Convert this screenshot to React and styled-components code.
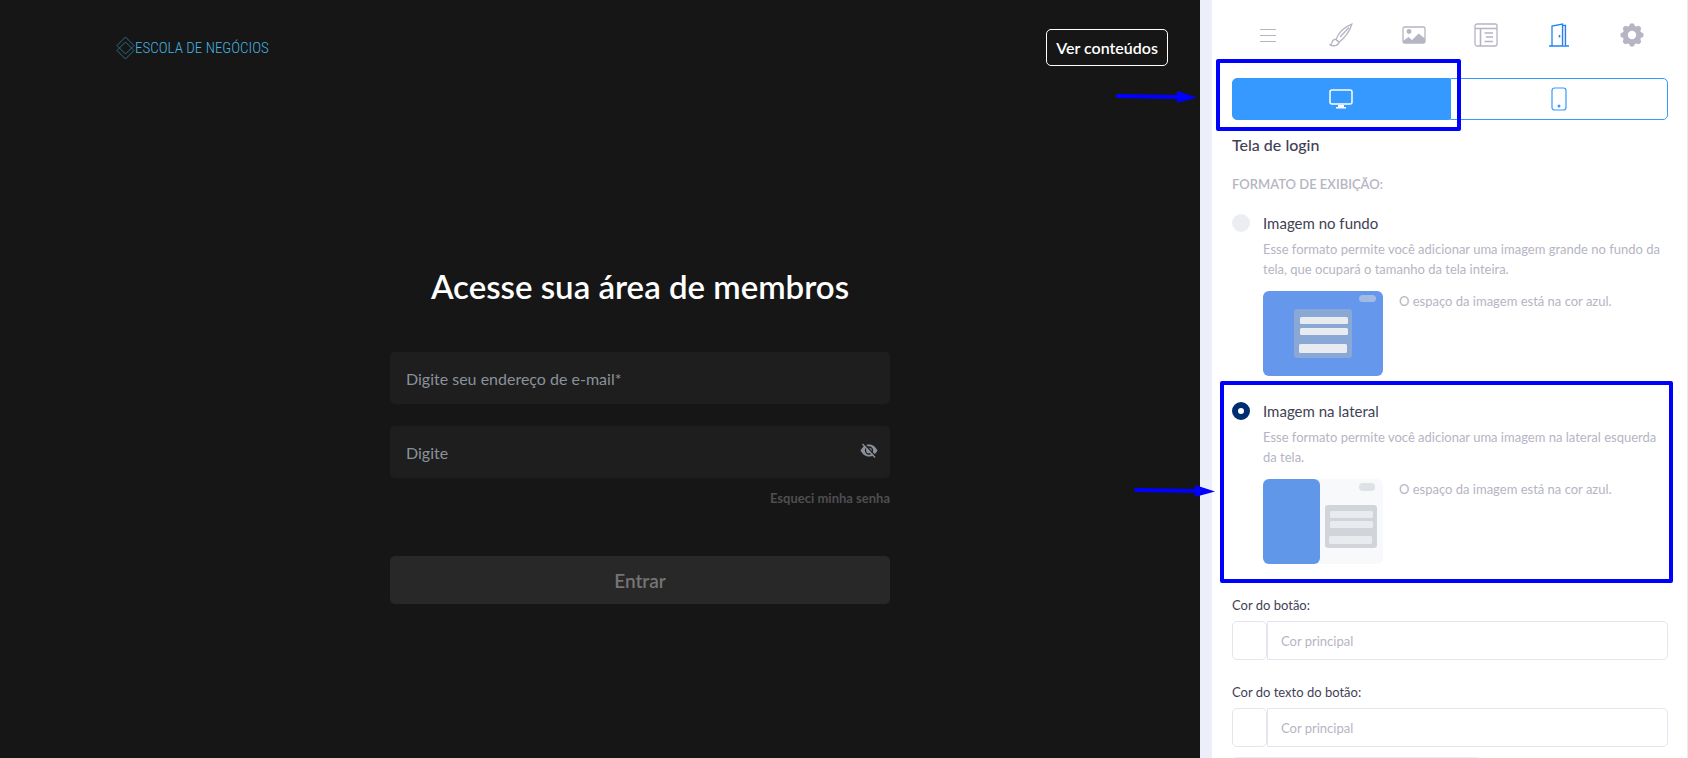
import React, { useState } from "react";
import styled, { createGlobalStyle } from "styled-components";

function App() {
    return (
        <>
            <GlobalStyle />
            <Page>
                <LoginPreview />
                <SettingsPanel />
            </Page>
        </>
    );
}

export default App;

function LoginPreview() {
    const [visible, setVisible] = useState(false);

    return (
        <Preview>
            <PreviewHeader>
                <Logo href="#">
                    <svg width="19" height="24" viewBox="0 0 19 24" fill="none" stroke="#2b6c80">
                        <path d="M9.500 1L18 9.500 9.500 18 1 9.500z" />
                        <path d="M9.500 6L18 14.500 9.500 23 1 14.500z" />
                    </svg>
                    <LogoText>ESCOLA DE NEGÓCIOS</LogoText>
                </Logo>
                <ContentsButton type="button">Ver conteúdos</ContentsButton>
            </PreviewHeader>
            <LoginForm onSubmit={(e) => e.preventDefault()}>
                <LoginTitle>Acesse sua área de membros</LoginTitle>
                <LoginInput
                    type="email"
                    aria-label="Digite seu endereço de e-mail"
                    placeholder="Digite seu endereço de e-mail*"
                />
                <PasswordBox>
                    <LoginInput
                        type={visible ? "text" : "password"}
                        aria-label="Senha"
                        placeholder="Digite"
                    />
                    <EyeButton
                        type="button"
                        aria-label="Mostrar senha"
                        onClick={() => setVisible(!visible)}
                    >
                        <EyeOffIcon />
                    </EyeButton>
                </PasswordBox>
                <ForgotLink href="#">Esqueci minha senha</ForgotLink>
                <SubmitButton type="submit">Entrar</SubmitButton>
            </LoginForm>
        </Preview>
    );
}

const MENU = [
    { name: "Menu", Icon: MenuIcon },
    { name: "Aparência", Icon: BrushIcon },
    { name: "Imagens", Icon: PictureIcon },
    { name: "Layout", Icon: LayoutIcon },
    { name: "Login", Icon: DoorIcon },
    { name: "Configurações", Icon: GearIcon },
];

const FORMATS = [
    {
        id: "fundo",
        title: "Imagem no fundo",
        text: "Esse formato permite você adicionar uma imagem grande no fundo da tela, que ocupará o tamanho da tela inteira.",
        Thumb: BackgroundThumb,
    },
    {
        id: "lateral",
        title: "Imagem na lateral",
        text: "Esse formato permite você adicionar uma imagem na lateral esquerda da tela.",
        Thumb: SideThumb,
    },
];

const COLORS = [
    { id: "cor-botao", label: "Cor do botão:" },
    { id: "cor-texto", label: "Cor do texto do botão:" },
];

function SettingsPanel() {
    const [tab, setTab] = useState("Login");
    const [device, setDevice] = useState("desktop");
    const [format, setFormat] = useState("lateral");

    return (
        <Panel>
            <MenuBar>
                {MENU.map(({ name, Icon }) => (
                    <MenuButton
                        key={name}
                        type="button"
                        aria-label={name}
                        $active={tab === name}
                        onClick={() => setTab(name)}
                    >
                        <Icon />
                    </MenuButton>
                ))}
            </MenuBar>

            <DeviceSwitch>
                <DeviceButton
                    type="button"
                    aria-label="Computador"
                    $active={device === "desktop"}
                    onClick={() => setDevice("desktop")}
                >
                    <DesktopIcon />
                </DeviceButton>
                <DeviceButton
                    type="button"
                    aria-label="Celular"
                    $active={device === "mobile"}
                    onClick={() => setDevice("mobile")}
                >
                    <PhoneIcon />
                </DeviceButton>
                <DeviceMark />
                <DeviceArrow />
            </DeviceSwitch>

            <PanelTitle>Tela de login</PanelTitle>
            <SectionTitle>FORMATO DE EXIBIÇÃO:</SectionTitle>

            {FORMATS.map(({ id, title, text, Thumb }) => (
                <Option key={id}>
                    <Radio
                        type="radio"
                        name="formato"
                        id={id}
                        checked={format === id}
                        onChange={() => setFormat(id)}
                    />
                    <OptionBody>
                        <OptionTitle htmlFor={id}>{title}</OptionTitle>
                        <OptionText>{text}</OptionText>
                        <Example>
                            <Thumb />
                            <OptionText>O espaço da imagem está na cor azul.</OptionText>
                        </Example>
                    </OptionBody>
                    {id === "lateral" && (
                        <>
                            <OptionMark />
                            <OptionArrow />
                        </>
                    )}
                </Option>
            ))}

            <Fields>
                {COLORS.map(({ id, label }) => (
                    <div key={id}>
                        <FieldLabel htmlFor={id}>{label}</FieldLabel>
                        <ColorRow>
                            <Swatch type="button" aria-label="Escolher cor" />
                            <ColorInput id={id} type="text" placeholder="Cor principal" />
                        </ColorRow>
                    </div>
                ))}
            </Fields>
            <NextField />
        </Panel>
    );
}

function Arrow({ className }) {
    return (
        <svg className={className} width="82" height="14" viewBox="0 0 82 14">
            <path d="M2 6L63 7" stroke="#00f" strokeWidth="4" strokeLinecap="round" />
            <path d="M61 1L81 7.500 61 13z" fill="#00f" />
        </svg>
    );
}

/* icons */

function EyeOffIcon() {
    return (
        <svg width="18" height="16" viewBox="0 0 18 16">
            <path
                d="M0.500 7.500C3 3 6 1.500 9 1.500s6 1.500 8.500 6C15 12 12 13.500 9 13.500S3 12 .5 7.500z"
                fill="#8a919b"
            />
            <circle cx="9" cy="7.500" r="3.500" fill="none" stroke="#1e1e1e" strokeWidth="1.300" />
            <path d="M3.500 0L16 13.500" stroke="#1e1e1e" strokeWidth="1.500" />
            <path d="M2.500 1L15 14.500" stroke="#8a919b" strokeWidth="1.300" />
        </svg>
    );
}

function MenuIcon() {
    return (
        <svg width="24" height="24" viewBox="0 0 24 24" fill="none" stroke="currentColor">
            <path d="M4 6.500h16M4 12.500h16M4 18.500h16" strokeWidth="1.200" />
        </svg>
    );
}

function BrushIcon() {
    return (
        <svg width="24" height="24" viewBox="0 0 24 24" fill="none" stroke="currentColor" strokeWidth="1.300">
            <path d="M7 16.500C9.500 10 15.500 4 22.800 1.200 20.500 8.500 16 14.500 10 19.200z" />
            <path d="M20 4.500L11 14" />
            <path d="M7 16.500c-2-.3-3.600.8-4 3-.2 1.400-.9 2-2 2.400 2.500 1.500 8.500 1.200 9-2.700z" />
        </svg>
    );
}

function PictureIcon() {
    return (
        <svg width="24" height="24" viewBox="0 0 24 24">
            <rect x="1" y="4" width="22" height="16" rx="1.500" fill="none" stroke="currentColor" strokeWidth="1.300" />
            <circle cx="7" cy="8.500" r="2.400" fill="currentColor" />
            <path d="M1 18l5.500-4 3.500 3 6.500-6.500 6.500 5V20H1z" fill="currentColor" />
        </svg>
    );
}

function LayoutIcon() {
    return (
        <svg width="24" height="24" viewBox="0 0 24 24" fill="none" stroke="currentColor" strokeWidth="1.300">
            <rect x="1" y="1" width="22" height="22" rx="2" />
            <path d="M1 5.500h22M6.500 5.500V23" strokeWidth="1.600" />
            <path d="M10.500 10h8.500M12 14h7M10.500 18.500h8.500" />
        </svg>
    );
}

function DoorIcon() {
    return (
        <svg width="24" height="24" viewBox="0 0 24 24" fill="none" stroke="currentColor" strokeWidth="1.300">
            <path d="M2 23h20M5 23V3L15.500 1v22M15.500 2.500h3V23" />
            <path d="M17 3v19.500" stroke="#d9c8e8" />
            <path d="M12.500 12v2.500" strokeWidth="1.600" />
        </svg>
    );
}

const TEETH = [0, 45, 90, 135, 180, 225, 270, 315];

function GearIcon() {
    return (
        <svg width="24" height="24" viewBox="-12 -12 24 24" fill="currentColor">
            <circle r="6.700" fill="none" stroke="currentColor" strokeWidth="5" />
            {TEETH.map((angle) => (
                <path
                    key={angle}
                    d="M-3.500 -8L-1.600 -11.500H1.600L3.500 -8z"
                    transform={`rotate(${angle})`}
                />
            ))}
        </svg>
    );
}

function DesktopIcon() {
    return (
        <svg width="24" height="24" viewBox="0 0 24 24" fill="none" stroke="currentColor">
            <rect x="1" y="3" width="22" height="14" rx="2" strokeWidth="1.500" />
            <path d="M9 18h6v2h2v1.500H7V20h2z" fill="currentColor" stroke="none" />
        </svg>
    );
}

function PhoneIcon() {
    return (
        <svg width="24" height="24" viewBox="0 0 24 24" fill="none" stroke="currentColor">
            <rect x="5" y="1" width="14" height="22" rx="2.500" strokeWidth="1.200" />
            <circle cx="12" cy="19" r="1.500" fill="currentColor" stroke="none" />
        </svg>
    );
}

function BackgroundThumb() {
    return (
        <ThumbSvg viewBox="0 0 120 85">
            <rect width="120" height="85" rx="6" fill="#6597ec" />
            <rect x="96" y="4" width="17" height="7" rx="3.500" fill="#a2bbe3" />
            <rect x="31" y="18" width="58" height="49" rx="3" fill="#8aa8d6" />
            <rect x="37" y="26" width="48" height="7" rx="1.500" fill="#e8ecf0" />
            <rect x="37" y="37" width="48" height="7" rx="1.500" fill="#e8ecf0" />
            <rect x="36" y="53" width="48" height="9" rx="1.500" fill="#e8ecf0" />
        </ThumbSvg>
    );
}

function SideThumb() {
    return (
        <ThumbSvg viewBox="0 0 120 85">
            <rect width="120" height="85" rx="6" fill="#f7f9fb" />
            <rect width="57" height="85" rx="6" fill="#6197e9" />
            <rect x="96" y="4" width="16" height="8" rx="4" fill="#dee2e7" />
            <rect x="62" y="26" width="52" height="43" rx="3" fill="#d1d5da" />
            <rect x="67" y="32" width="43" height="7" rx="1.500" fill="#e8ecef" />
            <rect x="67" y="42" width="43" height="7" rx="1.500" fill="#e8ecef" />
            <rect x="66" y="57" width="43" height="8" rx="1.500" fill="#e8ecef" />
        </ThumbSvg>
    );
}

// styled-components

const GlobalStyle = createGlobalStyle`
    * {
        box-sizing: border-box;
    }

    body {
        margin: 0;
        font-family: Lato, "Liberation Sans", sans-serif;
        font-size: 13px;
        color: #3f4254;
    }

    button,
    input {
        margin: 0;
        font-family: inherit;
    }

    svg {
        display: block;
        flex-shrink: 0;
    }
`;

const Page = styled.div`
    display: grid;
    grid-template-columns: 1fr 488px;
    height: 100vh;
    overflow: hidden;
`;

const Preview = styled.main`
    padding: 29px 0 0 80px;
    background: #161616;
`;

const PreviewHeader = styled.header`
    display: flex;
    align-items: center;
    justify-content: space-between;
    padding: 0 32px 0 36px;
`;

const Logo = styled.a`
    display: flex;
    align-items: center;
    text-decoration: none;
`;

const LogoText = styled.span`
    font-family: "Roboto Condensed", Roboto, sans-serif;
    font-size: 15px;
    font-weight: 300;
    color: #45b4e0;
`;

const ContentsButton = styled.button`
    height: 37px;
    padding: 0 9px;
    border: 1px solid #fff;
    border-radius: 5px;
    background: transparent;
    color: #fff;
    font-size: 16px;
    font-weight: 600;
`;

const LoginForm = styled.form`
    display: flex;
    flex-direction: column;
    max-width: 500px;
    margin: 200px auto 0;
`;

const LoginTitle = styled.h1`
    margin: 0 0 46px;
    color: #fff;
    font-size: 33px;
    font-weight: 600;
    line-height: 40px;
    text-align: center;
`;

const LoginInput = styled.input`
    width: 100%;
    height: 52px;
    padding: 0 16px;
    border: 0;
    border-radius: 5px;
    background: #1e1e1e;
    color: #fff;
    font-size: 16px;

    &::placeholder {
        color: #8a919b;
    }
`;

const PasswordBox = styled.div`
    position: relative;
    margin-top: 22px;
`;

const EyeButton = styled.button`
    position: absolute;
    top: 17px;
    right: 12px;
    padding: 0;
    border: 0;
    background: none;
`;

const ForgotLink = styled.a`
    align-self: flex-end;
    margin-top: 12px;
    color: #4e4e50;
    font-size: 13px;
    font-weight: 700;
    line-height: 16px;
    text-decoration: none;
`;

const SubmitButton = styled.button`
    height: 48px;
    margin-top: 50px;
    border: 0;
    border-radius: 5px;
    background: #282828;
    color: #757575;
    font-size: 19px;
    font-weight: 600;
`;

const Panel = styled.aside`
    padding: 0 19px 0 20px;
    border-right: 1px solid #ececf0;
    border-left: 12px solid #eceff9;
    background: #fff;
`;

const MenuBar = styled.nav`
    display: grid;
    grid-template-columns: repeat(6, 1fr);
    padding: 23px 0 31px;
`;

const MenuButton = styled.button`
    display: flex;
    justify-content: center;
    padding: 0;
    border: 0;
    background: none;
    color: ${({ $active }) => ($active ? "#1b84f5" : "#b5b5c3")};
`;

const DeviceSwitch = styled.div`
    position: relative;
    display: grid;
    grid-template-columns: 1fr 1fr;
`;

const DeviceButton = styled.button`
    display: flex;
    align-items: center;
    justify-content: center;
    height: 42px;
    padding: 0;
    border: 1px solid #3699ff;
    background: ${({ $active }) => ($active ? "#3699ff" : "#fff")};
    color: ${({ $active }) => ($active ? "#fff" : "#3699ff")};

    &:first-child {
        border-radius: 5px 0 0 5px;
    }

    &:nth-child(2) {
        border-radius: 0 5px 5px 0;
    }
`;

const Mark = styled.div`
    position: absolute;
    border: 4px solid #00f;
    border-radius: 2px;
    pointer-events: none;
`;

const DeviceMark = styled(Mark)`
    inset: -19px 207px -11px -16px;
`;

const DeviceArrow = styled(Arrow)`
    position: absolute;
    top: 12px;
    left: -116px;
`;

const PanelTitle = styled.h2`
    margin: 15px 0 0;
    font-size: 16px;
    font-weight: 500;
    line-height: 20px;
`;

const SectionTitle = styled.h3`
    margin: 19px 0 0;
    color: #b5b5c3;
    font-size: 13px;
    font-weight: 600;
    line-height: 20px;
`;

const Option = styled.div`
    position: relative;
    display: flex;
    gap: 13px;
    padding: 20px 0 6px;
`;

const OptionMark = styled(Mark)`
    inset: -1px -5px -13px -12px;
`;

const OptionArrow = styled(Arrow)`
    position: absolute;
    top: 102px;
    left: -98px;
`;

const Radio = styled.input`
    appearance: none;
    flex-shrink: 0;
    width: 18px;
    height: 18px;
    margin: 0;
    border-radius: 50%;
    background: #ebedf3;

    &:checked {
        border: 6px solid #002d72;
        background: #fff;
    }
`;

const OptionBody = styled.div`
    flex: 1;
`;

const OptionTitle = styled.label`
    display: block;
    font-size: 15px;
    line-height: 18px;
`;

const OptionText = styled.p`
    margin: 7px 0 0;
    color: #b5b5c3;
    font-size: 13px;
    line-height: 20px;
`;

const Example = styled.div`
    display: flex;
    gap: 16px;
    margin-top: 12px;

    ${OptionText} {
        margin: 0;
    }
`;

const ThumbSvg = styled.svg`
    width: 120px;
    height: 85px;
`;

const Fields = styled.div`
    display: grid;
    gap: 22px;
    padding: 25px 0 10px;
`;

const FieldLabel = styled.label`
    display: block;
    line-height: 20px;
`;

const ColorRow = styled.div`
    display: flex;
    margin-top: 6px;
`;

const Swatch = styled.button`
    width: 35px;
    height: 39px;
    border: 1px solid #e4e6ef;
    border-radius: 5px;
    background: #fff;
`;

const ColorInput = styled.input`
    flex: 1;
    height: 39px;
    padding: 0 13px;
    border: 1px solid #e4e6ef;
    border-radius: 0 5px 5px 0;
    font-size: 13px;

    &::placeholder {
        color: #b5b5c3;
    }
`;

const NextField = styled.div`
    width: 250px;
    height: 40px;
    border-radius: 5px;
    border: 1px solid #ebedf3;
`;
